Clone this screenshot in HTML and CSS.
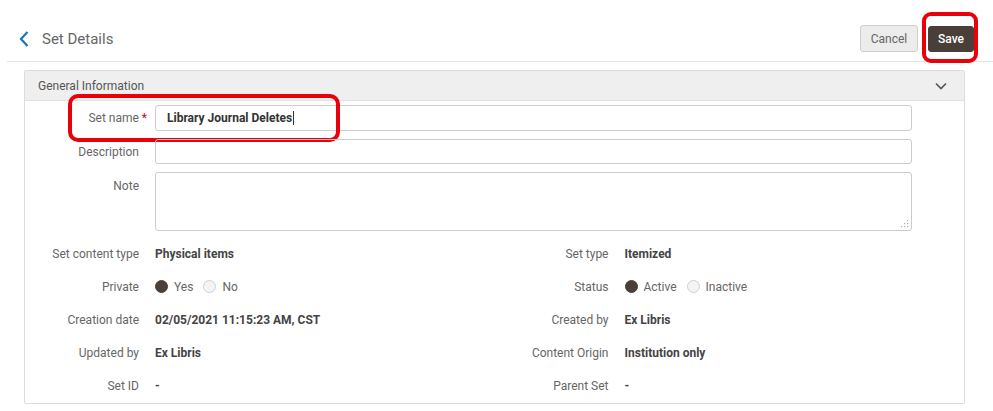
FILE: index.html
```html
<!DOCTYPE html>
<html>
<head>
<meta charset="utf-8">
<link rel="stylesheet" href="styles.css">
</head>
<body>
<header class="topbar">
  <div class="title">
    <svg class="back" width="12" height="18" viewBox="0 0 12 18"><path d="M9.5 2 L3 9 L9.5 16" fill="none" stroke="#1b75bb" stroke-width="2.2"/></svg>
    <span>Set Details</span>
  </div>
  <div class="actions">
    <button class="btn cancel">Cancel</button>
    <span class="save-wrap">
      <button class="btn save">Save</button>
      <span class="highlight save-hl"></span>
    </span>
  </div>
</header>

<section class="panel">
  <div class="panel-head">
    <span>General Information</span>
    <svg width="12" height="8" viewBox="0 0 12 8"><path d="M1 1.5 L6 6.5 L11 1.5" fill="none" stroke="#555" stroke-width="1.6"/></svg>
  </div>
  <div class="panel-body">
    <div class="form">
      <div class="frow">
        <label class="flabel">Set name<span class="req">*</span></label>
        <div class="input strong">Library Journal Deletes<span class="caret"></span></div>
        <span class="highlight name-hl"></span>
      </div>
      <div class="frow">
        <label class="flabel">Description</label>
        <div class="input short"></div>
      </div>
      <div class="frow">
        <label class="flabel">Note</label>
        <div class="textarea">
          <svg class="grip" width="8" height="8" viewBox="0 0 8 8"><g fill="#aaa"><rect x="6" y="0" width="1.2" height="1.2"/><rect x="3" y="3" width="1.2" height="1.2"/><rect x="6" y="3" width="1.2" height="1.2"/><rect x="0" y="6" width="1.2" height="1.2"/><rect x="3" y="6" width="1.2" height="1.2"/><rect x="6" y="6" width="1.2" height="1.2"/></g></svg>
        </div>
      </div>
    </div>

    <div class="info">
      <div class="item"><span class="ilabel">Set content type</span><span class="ival">Physical items</span></div>
      <div class="item"><span class="ilabel">Set type</span><span class="ival">Itemized</span></div>
      <div class="item"><span class="ilabel">Private</span>
        <span class="radios">
          <span class="radio on"></span><span class="rtext">Yes</span>
          <span class="radio"></span><span class="rtext">No</span>
        </span>
      </div>
      <div class="item"><span class="ilabel">Status</span>
        <span class="radios">
          <span class="radio on"></span><span class="rtext">Active</span>
          <span class="radio"></span><span class="rtext">Inactive</span>
        </span>
      </div>
      <div class="item"><span class="ilabel">Creation date</span><span class="ival">02/05/2021 11:15:23 AM, CST</span></div>
      <div class="item"><span class="ilabel">Created by</span><span class="ival">Ex Libris</span></div>
      <div class="item"><span class="ilabel">Updated by</span><span class="ival">Ex Libris</span></div>
      <div class="item"><span class="ilabel">Content Origin</span><span class="ival">Institution only</span></div>
      <div class="item"><span class="ilabel">Set ID</span><span class="ival">-</span></div>
      <div class="item"><span class="ilabel">Parent Set</span><span class="ival">-</span></div>
    </div>
  </div>
</section>
</body>
</html>
```
FILE: styles.css
```css
* { box-sizing: border-box; }
html, body { margin: 0; padding: 0; background: #fff; }
body { font-family: Roboto, "Liberation Sans", sans-serif; color: #555; width: 993px; height: 411px; overflow: hidden; }

.topbar {
  height: 62px;
  margin-left: 7px;
  border-bottom: 1px solid #e4e4e4;
  display: flex;
  align-items: flex-end;
  justify-content: space-between;
  padding: 0 19px 9px 11px;
}
.title { display: flex; align-items: center; gap: 12px; font-size: 15px; color: #666; height: 27px; }
.back { display: block; }
.actions { display: flex; align-items: center; gap: 10px; }
.btn {
  font-family: Roboto, "Liberation Sans", sans-serif;
  font-size: 12px;
  height: 27px;
  border-radius: 3px;
  padding: 0;
  cursor: pointer;
}
.cancel { width: 58px; background: #ececec; border: 1px solid #cfcfcf; color: #666; }
.save { width: 46px; height: 26px; background: #4a3f38; border: 1px solid #4a3f38; color: #fff; font-weight: 500; display: block; }
.save-wrap { position: relative; display: block; }
.highlight { position: absolute; border: 4px solid #e8000b; pointer-events: none; }
.save-hl { left: -6px; top: -14px; width: 56px; height: 51px; border-radius: 9px; }

.panel {
  margin: 8px 28px 0 24px;
  border: 1px solid #dcdcdc;
  border-radius: 2px;
  height: 334px;
}
.panel-head {
  height: 30px;
  background: #efefef;
  border-bottom: 1px solid #e2e2e2;
  display: flex;
  align-items: center;
  justify-content: space-between;
  padding: 0 17px 0 13px;
  font-size: 12px;
  color: #555;
}
.panel-body { padding-top: 4px; }
.form { display: flex; flex-direction: column; gap: 8px; padding-right: 52px; }
.frow { display: flex; align-items: flex-start; gap: 16px; position: relative; }
.flabel {
  width: 114px;
  text-align: right;
  font-size: 12px;
  color: #666;
  line-height: 26px;
  flex: none;
}
.req { color: #d0021b; margin-left: 3px; margin-right: -8px; }
.input {
  flex: 1;
  height: 26px;
  border: 1px solid #ccc;
  border-radius: 3px;
  font-size: 12px;
  line-height: 24px;
  padding-left: 11px;
}
.input.short { height: 25px; }
.input.strong { font-weight: 700; color: #333; }
.caret { display: inline-block; width: 1px; height: 14px; background: #333; vertical-align: -3px; margin-left: 1px; }
.textarea {
  flex: 1;
  height: 59px;
  border: 1px solid #ccc;
  border-radius: 3px;
  margin-top: -1px;
  display: flex;
  align-items: flex-end;
  justify-content: flex-end;
  padding: 0 2px 2px 0;
}
.grip { display: block; }
.name-hl { left: 43px; top: -11px; width: 272px; height: 48px; border-radius: 10px; }

.info {
  display: grid;
  grid-template-columns: 1fr 1fr;
  grid-auto-rows: 33px;
  margin-top: 6px;
}
.item { display: flex; align-items: center; gap: 16px; font-size: 12px; }
.ilabel { width: 114px; text-align: right; color: #666; flex: none; }
.ival { font-weight: 700; color: #444; }
.radios { display: flex; align-items: center; }
.radio {
  width: 13px; height: 13px; border-radius: 50%;
  border: 1px solid #cfcfcf; background: #f4f4f4;
  margin-right: 6px;
}
.radio.on { background: #4a3f39; border-color: #4a3f39; }
.rtext { color: #666; margin-right: 10px; }
```
